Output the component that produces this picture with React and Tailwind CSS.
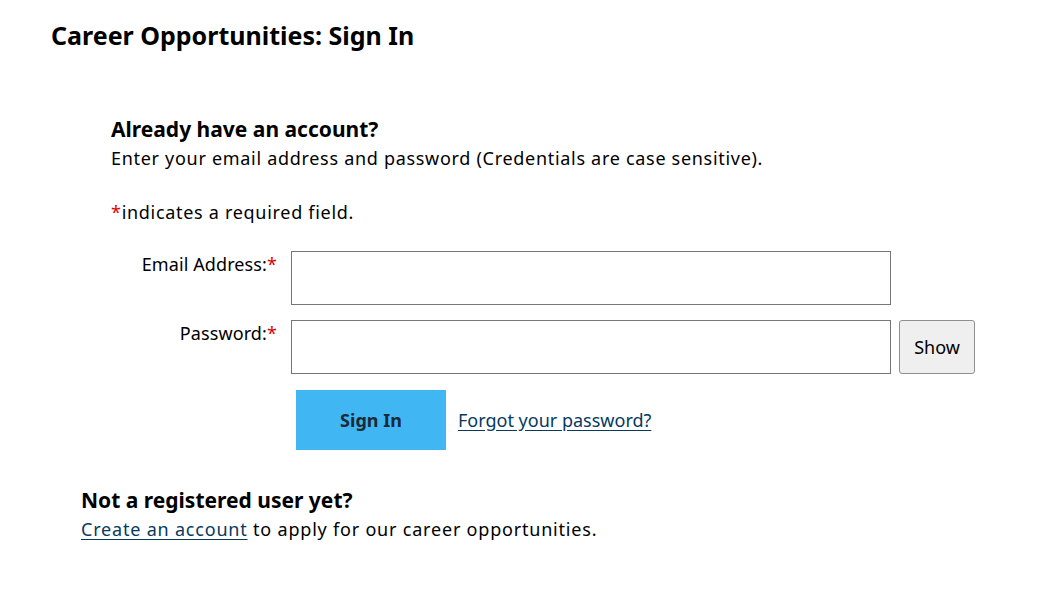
export default function App() {
  const font = { fontFamily: '"Noto Sans", "Open Sans", sans-serif' };
  return (
    <div className="min-h-screen bg-white text-black" style={font}>
      <h1 className="pl-[51px] pt-[20px] text-[25px] leading-[30px] font-bold">
        Career Opportunities: Sign In
      </h1>

      <div className="ml-[111px] mt-[66px]">
        <h2 className="text-[21px] leading-[26px] font-bold">Already have an account?</h2>
        <p className="mt-[4px] text-[18px] leading-[24px] tracking-[0.7px]">
          Enter your email address and password (Credentials are case sensitive).
        </p>
        <p className="mt-[30px] text-[18px] leading-[24px] tracking-[0.7px]">
          <span className="text-[#e00000]">*</span>indicates a required field.
        </p>
      </div>

      <form className="ml-[111px] mt-[27px] flex flex-col gap-[15px]" onSubmit={(e) => e.preventDefault()}>
        <div className="flex items-start">
          <label className="w-[166px] pt-[1px] text-right text-[18px] leading-[24px] tracking-[0.1px]">
            Email Address:<span className="text-[#e00000]">*</span>
          </label>
          <input
            type="email"
            className="ml-[14px] h-[54px] w-[600px] border border-[#767676] bg-white px-2 outline-none"
          />
        </div>
        <div className="flex items-start">
          <label className="w-[166px] pt-[1px] text-right text-[18px] leading-[24px] tracking-[0.1px]">
            Password:<span className="text-[#e00000]">*</span>
          </label>
          <input
            type="password"
            className="ml-[14px] h-[54px] w-[600px] border border-[#767676] bg-white px-2 outline-none"
          />
          <button
            type="button"
            className="ml-[8px] h-[54px] w-[76px] rounded-[3px] border border-[#8f8f8f] bg-[#efefef] text-[18px]"
          >
            Show
          </button>
        </div>
        <div className="ml-[185px] mt-px flex items-center">
          <button
            type="submit"
            className="h-[60px] w-[150px] bg-[#40b7f3] text-[18px] font-bold text-[#1b2a36]"
          >
            Sign In
          </button>
          <a href="#" className="ml-[12px] text-[18px] text-[#063a5e] underline underline-offset-[3px]">
            Forgot your password?
          </a>
        </div>
      </form>

      <div className="ml-[81px] mt-[37px]">
        <h2 className="text-[21px] leading-[26px] font-bold">Not a registered user yet?</h2>
        <p className="mt-[4px] text-[18px] leading-[24px] tracking-[0.8px]">
          <a href="#" className="text-[#063a5e] underline underline-offset-[3px]">Create an account</a> to apply
          for our career opportunities.
        </p>
      </div>
    </div>
  );
}
